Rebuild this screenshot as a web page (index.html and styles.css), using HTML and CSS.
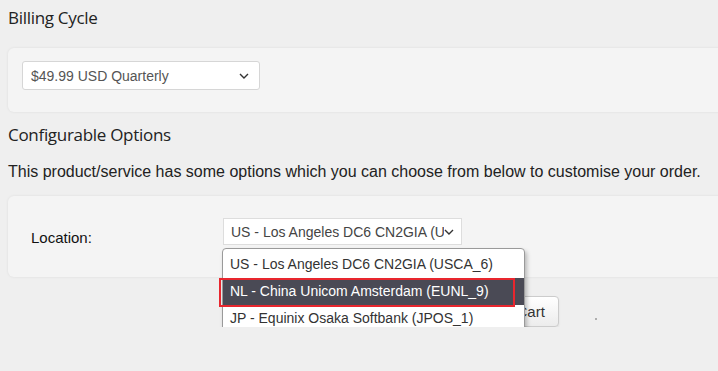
FILE: index.html
```html
<!DOCTYPE html>
<html lang="en">
<head>
    <meta charset="UTF-8">
    <meta name="viewport" content="width=device-width, initial-scale=1.0">
    <title>Configure</title>
    <link rel="stylesheet" href="styles.css">
</head>
<body>
    <div class="page">
        <h3 class="section-title">Billing Cycle</h3>
        <div class="card card-billing">
            <div class="fake-select billing-select">
                <span class="select-text">$49.99 USD Quarterly</span>
                <svg class="chevron" width="10" height="6" viewBox="0 0 10 6"><path d="M1 1l4 4 4-4" fill="none" stroke="#333" stroke-width="1.4"/></svg>
            </div>
        </div>

        <h3 class="section-title options-title">Configurable Options</h3>
        <p class="intro">This product/service has some options which you can choose from below to customise your order.</p>

        <div class="card card-options">
            <label class="opt-label">Location:</label>
            <div class="select-wrap">
                <div class="fake-select location-select">
                    <span class="select-text">US - Los Angeles DC6 CN2GIA (USCA_6)</span>
                    <svg class="chevron" width="10" height="6" viewBox="0 0 10 6"><path d="M1 1l4 4 4-4" fill="none" stroke="#333" stroke-width="1.4"/></svg>
                </div>
                <ul class="dropdown">
                    <li>US - Los Angeles DC6 CN2GIA (USCA_6)</li>
                    <li class="active">NL - China Unicom Amsterdam (EUNL_9)</li>
                    <li>JP - Equinix Osaka Softbank (JPOS_1)</li>
                </ul>
            </div>
        </div>

        <div class="actions">
            <button type="button" class="btn-cart">Add to Cart</button>
            <span class="dot"></span>
        </div>
    </div>
</body>
</html>
```

FILE: styles.css
```css
body {
    margin: 0;
    background: #efefef;
    overflow: hidden;
    font-family: "Liberation Sans", Arial, sans-serif;
    color: #222;
}

.page {
    width: 780px;
    padding: 0 0 0 8px;
}

/* Headings */
.section-title {
    font-family: "Open Sans", sans-serif;
    font-weight: 400;
    font-size: 17px;
    letter-spacing: -0.3px;
    color: #222;
    margin: 0;
    padding-top: 6px;
    height: 42px;
}

.options-title {
    padding-top: 8px;
    height: 36px;
}

.intro {
    font-size: 16px;
    margin: 0;
    height: 33px;
    padding-top: 4px;
}

/* Cards */
.card {
    background: #f4f4f4;
    border-radius: 6px;
    box-shadow: 0 0 3px rgba(0, 0, 0, 0.08);
}

.card-billing {
    height: 64px;
    padding: 13px 0 0 14px;
    box-sizing: border-box;
    margin-bottom: 3px;
}

.card-options {
    height: 81px;
    display: flex;
    align-items: flex-start;
    padding: 22px 0 0 23px;
    box-sizing: border-box;
}

/* Selects */
.fake-select {
    background: #fff;
    border: 1px solid #d6d6d6;
    border-radius: 3px;
    display: flex;
    align-items: center;
    box-sizing: border-box;
    font-size: 14px;
    color: #555;
}

.billing-select {
    width: 238px;
    height: 29px;
    padding: 0 10px 0 8px;
    justify-content: space-between;
}

.location-select {
    width: 239px;
    height: 27px;
    padding: 0 7px 0 7px;
    color: #444;
    border-radius: 0;
    border-color: #ddd;
}

.location-select .select-text {
    width: 217px;
    overflow: hidden;
    white-space: nowrap;
}

.chevron {
    flex: none;
}

.opt-label {
    font-size: 15px;
    color: #111;
    width: 192px;
    margin-top: 11px;
}

.select-wrap {
    position: relative;
}

/* Open option list */
.dropdown {
    position: absolute;
    top: 30px;
    left: -1px;
    width: 301px;
    margin: 0;
    padding: 2px 0;
    list-style: none;
    background: #fff;
    border: 1px solid #9a9a9a;
    border-radius: 4px;
    box-shadow: 2px 3px 4px rgba(0, 0, 0, 0.25);
    z-index: 5;
}

.dropdown li {
    height: 27px;
    line-height: 27px;
    padding-left: 7px;
    font-size: 14px;
    color: #333;
    white-space: nowrap;
}

.dropdown li.active {
    background: #4a4a55;
    color: #fff;
    position: relative;
}

.dropdown li.active::after {
    content: "";
    position: absolute;
    left: -4px;
    top: 0;
    width: 292px;
    height: 25px;
    border: 2px solid #e8262e;
}

/* Button row */
.actions {
    display: flex;
    align-items: center;
    padding: 19px 0 0 447px;
}

.btn-cart {
    font-family: "Liberation Sans", Arial, sans-serif;
    font-size: 15px;
    color: #333;
    height: 31px;
    padding: 0 13px;
    background: linear-gradient(#fff, #ececec);
    border: 1px solid #ccc;
    border-radius: 4px;
    box-shadow: 0 1px 2px rgba(0, 0, 0, 0.08);
}

.dot {
    width: 2px;
    height: 2px;
    background: #999;
    border-radius: 50%;
    margin: 14px 0 0 36px;
}
```
